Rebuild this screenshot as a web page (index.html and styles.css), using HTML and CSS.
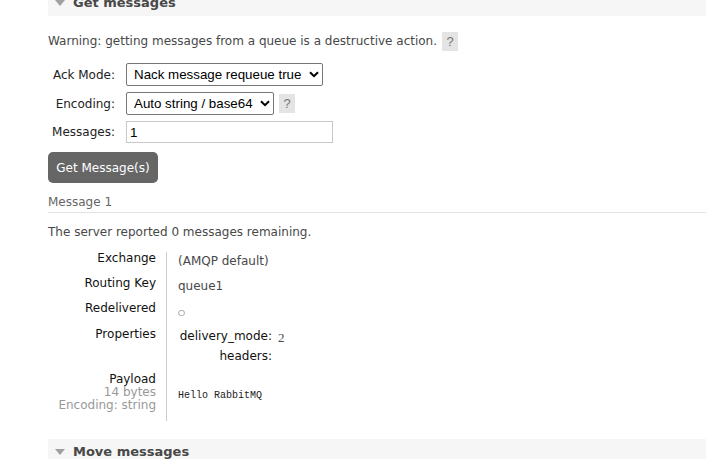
FILE: index.html
```html
<!DOCTYPE html>
<html>
<head>
<meta charset="utf-8">
<link rel="stylesheet" href="styles.css">
</head>
<body>
<div class="page">
  <section class="section section-first">
    <h2 class="sec-head"><span class="tri"></span>Get messages</h2>
    <div class="sec-body">
      <p class="warn">Warning: getting messages from a queue is a destructive action. <span class="help">?</span></p>
      <div class="form">
        <label class="f-label">Ack Mode:</label>
        <div class="f-field">
          <span class="sel">
            <select class="ack"><option>Nack message requeue true</option></select>
            <svg class="chev" width="10" height="7" viewBox="0 0 10 7"><path d="M1 1.2 L5 5.2 L9 1.2" fill="none" stroke="#000" stroke-width="2"/></svg>
          </span>
        </div>
        <label class="f-label">Encoding:</label>
        <div class="f-field">
          <span class="sel">
            <select class="enc"><option>Auto string / base64</option></select>
            <svg class="chev" width="10" height="7" viewBox="0 0 10 7"><path d="M1 1.2 L5 5.2 L9 1.2" fill="none" stroke="#000" stroke-width="2"/></svg>
          </span>
          <span class="help">?</span>
        </div>
        <label class="f-label">Messages:</label>
        <div class="f-field">
          <input class="num" type="text" value="1">
        </div>
      </div>
      <button class="btn">Get Message(s)</button>

      <div class="msg">
        <h3 class="msg-head">Message 1</h3>
        <p class="remaining">The server reported 0 messages remaining.</p>
        <div class="facts">
          <div class="th">Exchange</div>
          <div class="td">(AMQP default)</div>
          <div class="th">Routing Key</div>
          <div class="td">queue1</div>
          <div class="th">Redelivered</div>
          <div class="td"><span class="circ">○</span></div>
          <div class="th">Properties</div>
          <div class="td td-props">
            <div class="props">
              <div class="p-k">delivery_mode:</div><div class="p-v">2</div>
              <div class="p-k">headers:</div><div class="p-v"></div>
            </div>
          </div>
          <div class="th th-last">Payload<div class="sub">14 bytes</div><div class="sub">Encoding: string</div></div>
          <div class="td td-last"><pre class="payload">Hello RabbitMQ</pre></div>
        </div>
      </div>
    </div>
  </section>
  <section class="section">
    <h2 class="sec-head"><span class="tri"></span>Move messages</h2>
  </section>
</div>
</body>
</html>
```

FILE: styles.css
```css
html, body {
  margin: 0;
  padding: 0;
  background: #fff;
}
body {
  font-family: "DejaVu Sans", Verdana, sans-serif;
  font-size: 12px;
  color: #484848;
}
.page {
  padding-left: 48px;
  margin-top: -10px;
}
.sec-head {
  margin: 0;
  height: 26px;
  box-sizing: border-box;
  background: #f6f6f6;
  font-size: 13px;
  font-weight: bold;
  color: #484848;
  display: flex;
  align-items: center;
  padding-left: 7px;
  line-height: 26px;
}
.tri {
  width: 0;
  height: 0;
  border-left: 5px solid transparent;
  border-right: 5px solid transparent;
  border-top: 6px solid #a0a0a0;
  margin-right: 8px;
}
.sec-body {
  padding-bottom: 18px;
}
.warn {
  margin: 16px 0 0;
  display: flex;
  align-items: center;
  gap: 5px;
  line-height: 19px;
}
.help {
  display: inline-block;
  width: 16px;
  height: 19px;
  line-height: 19px;
  text-align: center;
  background: #e4e4e4;
  color: #777;
  font-size: 13px;
  font-family: "Liberation Sans", Arial, sans-serif;
}
.form {
  margin-top: 12px;
  display: grid;
  grid-template-columns: 67px auto;
  column-gap: 11px;
  row-gap: 6px;
  align-items: center;
  justify-content: start;
}
.f-label {
  text-align: right;
  color: #222;
}
.f-field {
  display: flex;
  align-items: center;
  gap: 5px;
}
.sel {
  position: relative;
  display: inline-block;
}
select {
  appearance: none;
  -webkit-appearance: none;
  font-family: "Liberation Sans", Arial, sans-serif;
  font-size: 13.33px;
  color: #000;
  background: #fff;
  border: 1px solid #767676;
  border-radius: 2px;
  height: 23px;
  padding: 0 20px 0 7px;
  margin: 0;
  display: block;
}
.chev {
  position: absolute;
  right: 4px;
  top: 8px;
  pointer-events: none;
}
.num {
  width: 207px;
  height: 22px;
  box-sizing: border-box;
  border: 1px solid #c8c8c8;
  font-family: "Liberation Sans", Arial, sans-serif;
  font-size: 13.33px;
  padding: 0 3px;
  margin: 0;
  color: #000;
}
.btn {
  margin-top: 9px;
  display: block;
  width: 110px;
  height: 31px;
  background: #666;
  color: #fff;
  border: none;
  border-radius: 5px;
  font-family: "DejaVu Sans", Verdana, sans-serif;
  font-size: 12px;
  padding: 0;
}
.msg-head {
  margin: 12px 0 0;
  font-size: 12px;
  font-weight: normal;
  color: #666;
  line-height: 15px;
  padding-bottom: 2px;
  border-bottom: 1px solid #e2e2e2;
}
.remaining {
  margin: 12px 0 0;
  line-height: 15px;
}
.facts {
  margin-top: 12px;
  display: grid;
  grid-template-columns: 118px 1fr;
  line-height: 13px;
}
.th {
  text-align: right;
  padding: 0 10px 12px 0;
  color: #111;
}
.td {
  border-left: 1px solid #ccc;
  padding: 3px 0 9px 11px;
}
.circ {
  font-size: 8px;
}
.td-props {
  padding: 0 0 5px 11px;
}
.props {
  display: grid;
  grid-template-columns: 94px auto;
  justify-content: start;
}
.p-k {
  text-align: right;
  color: #111;
  padding: 2px 0 5px;
}
.p-v {
  padding: 3px 0 4px 6px;
  font-family: "Liberation Serif", serif;
  font-size: 13px;
}
.th-last {
  padding-bottom: 10px;
}
.sub {
  color: #999;
  line-height: 12.5px;
}
.payload {
  margin: 13px 0 0;
  font-family: "Liberation Mono", monospace;
  font-size: 10px;
  color: #222;
}
```
